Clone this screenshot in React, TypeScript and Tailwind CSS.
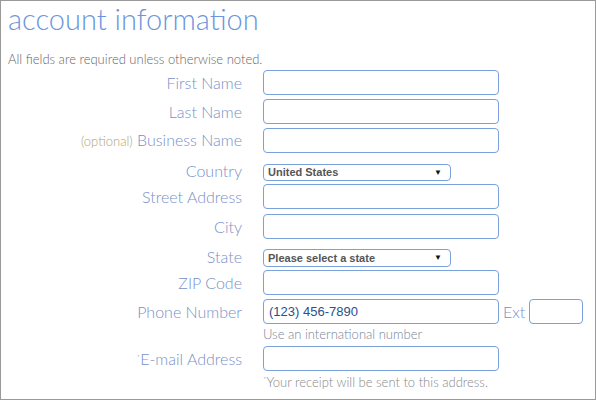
import React from "react";

const labelFont = { fontFamily: "Lato, 'Open Sans', sans-serif" };

function Label({ children, extra = "" }: { children: React.ReactNode; extra?: string }) {
  return (
    <div
      className={`w-[255px] shrink-0 pr-[21px] text-right text-[16px] font-light leading-[20px] text-[#7890c8] ${extra}`}
      style={labelFont}
    >
      {children}
    </div>
  );
}

function TextInput({ value, w = "w-[236px]" }: { value?: string; w?: string }) {
  return (
    <div
      className={`${w} h-[25px] shrink-0 rounded-[4px] border border-[#7aa1dc] bg-white flex items-center pl-[5px] text-[13px] text-[#2b4f8c]`}
      style={{ fontFamily: "'Liberation Sans', Arial, sans-serif" }}
    >
      {value}
    </div>
  );
}

function SelectBox({ value, h }: { value: string; h: string }) {
  return (
    <div
      className={`w-[188px] ${h} shrink-0 rounded-[4px] border border-[#7aa1dc] bg-white flex items-center justify-between pl-[4px] pr-[8px] text-[11px] font-bold leading-none text-[#555]`}
      style={{ fontFamily: "'Liberation Sans', Arial, sans-serif" }}
    >
      <span>{value}</span>
      <span className="text-[8px] text-[#111]">▼</span>
    </div>
  );
}

export default function App() {
  return (
    <div className="w-[596px] h-[400px] border border-[#999] bg-white overflow-hidden pl-[7px]">
      <div
        className="h-[39px] text-[29px] font-light leading-[36px] text-[#6c95dc]"
        style={labelFont}
      >
        account information
      </div>
      <div
        className="mt-[12px] h-[14px] text-[13px] font-light leading-[14px] text-[#666]"
        style={labelFont}
      >
        All fields are required unless otherwise noted.
      </div>

      <div className="mt-[4px] flex items-center h-[25px]">
        <Label>First Name</Label>
        <TextInput />
      </div>
      <div className="mt-[4px] flex items-center h-[25px]">
        <Label>Last Name</Label>
        <TextInput />
      </div>
      <div className="mt-[3px] flex items-center h-[26px]">
        <Label>
          <span className="text-[13px] text-[#b0a46c]">(optional)</span> Business Name
        </Label>
        <TextInput />
      </div>
      <div className="mt-[11px] flex items-center h-[17px]">
        <Label extra="-mt-[3px]">Country</Label>
        <SelectBox value="United States" h="h-[17px]" />
      </div>
      <div className="mt-[3px] flex items-center h-[25px]">
        <Label>Street Address</Label>
        <TextInput />
      </div>
      <div className="mt-[5px] flex items-center h-[25px]">
        <Label>City</Label>
        <TextInput />
      </div>
      <div className="mt-[10px] flex items-center h-[18px]">
        <Label extra="-mt-[3px]">State</Label>
        <SelectBox value="Please select a state" h="h-[18px]" />
      </div>
      <div className="mt-[3px] flex items-center h-[25px]">
        <Label>ZIP Code</Label>
        <TextInput />
      </div>
      <div className="mt-[4px] flex items-center h-[25px]">
        <Label>Phone Number</Label>
        <TextInput value="(123) 456-7890" />
        <span
          className="ml-[4px] mr-[4px] text-[16px] font-light text-[#7890c8]"
          style={labelFont}
        >
          Ext
        </span>
        <TextInput w="w-[54px]" />
      </div>
      <div
        className="mt-[3px] ml-[255px] h-[14px] text-[13px] font-light leading-[14px] text-[#7a8598]"
        style={labelFont}
      >
        Use an international number
      </div>
      <div className="mt-[5px] flex items-center h-[25px]">
        <Label>
          <sup className="text-[8px]">*</sup>E-mail Address
        </Label>
        <TextInput />
      </div>
      <div
        className="mt-[4px] ml-[255px] h-[14px] text-[13px] font-light leading-[14px] text-[#888]"
        style={labelFont}
      >
        <sup className="text-[8px]">*</sup>Your receipt will be sent to this address.
      </div>
    </div>
  );
}
